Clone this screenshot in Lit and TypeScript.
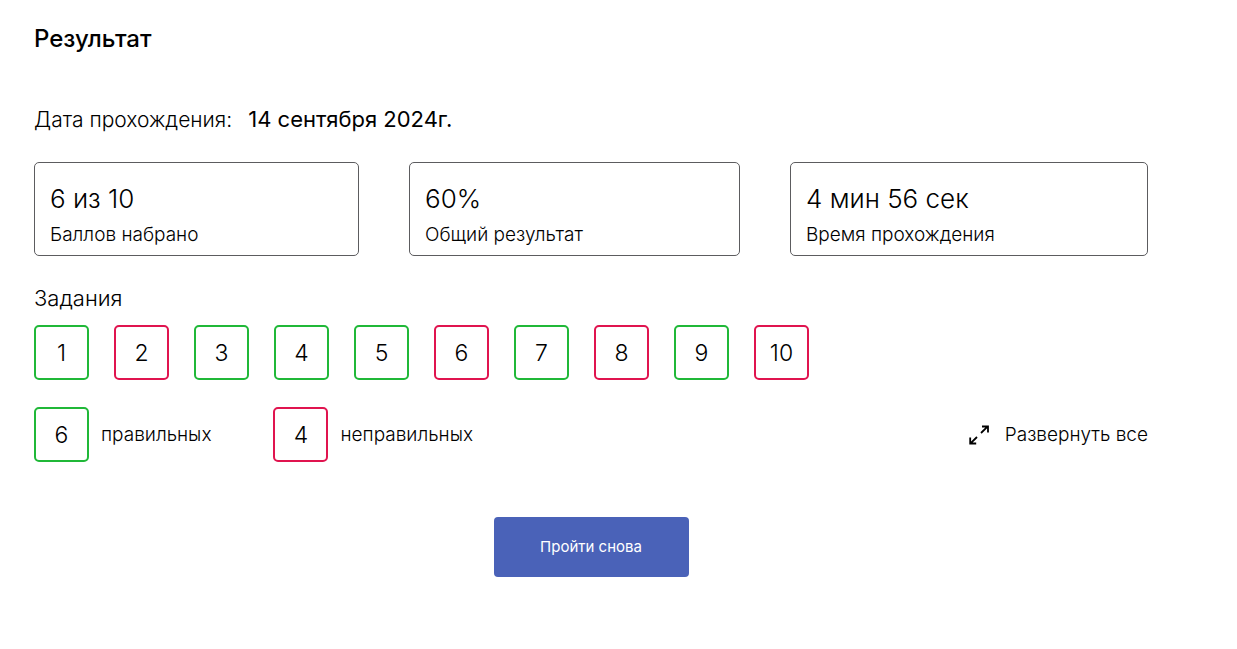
import { LitElement, html, css } from "lit";
import { customElement, property } from "lit/decorators.js";

@customElement("score-box")
class ScoreBox extends LitElement {
  @property() value = "";
  @property({ type: Boolean, reflect: true }) wrong = false;

  static styles = css`
    :host {
      box-sizing: border-box;
      flex: none;
      display: grid;
      place-items: center;
      width: 55px;
      height: 55px;
      border: 2px solid #20b838;
      border-radius: 5px;
      font-size: 23px;
      line-height: 28px;
    }
    :host([wrong]) {
      border-color: #e0144f;
    }
  `;

  render() {
    return html`<span>${this.value}</span>`;
  }
}

@customElement("app-root")
class AppRoot extends LitElement {
  private answers = [true, false, true, true, true, false, true, false, true, false];
  private stats = [
    { value: "6 из 10", label: "Баллов набрано" },
    { value: "60%", label: "Общий результат" },
    { value: "4 мин 56 сек", label: "Время прохождения" },
  ];

  static styles = css`
    :host {
      display: block;
      box-sizing: border-box;
      padding: 23px 89px 72px 34px;
      background: #fff;
      color: #000;
      font-family: Inter, "Open Sans", sans-serif;
      font-weight: 300;
      font-size: 19px;
      line-height: 24px;
    }
    .title {
      margin: 0;
      font-size: 24px;
      line-height: 32px;
      font-weight: 500;
    }
    .date {
      display: flex;
      align-items: baseline;
      gap: 16px;
      margin: 48px 0 26px;
      font-size: 21px;
      line-height: 32px;
    }
    .day {
      font-size: 22px;
      font-weight: 400;
    }
    .stats {
      display: grid;
      grid-template-columns: 325fr 331fr 358fr;
      gap: 50px;
    }
    .stat {
      padding: 18px 15px 8px;
      border: 1px solid #5c5c5f;
      border-radius: 5px;
    }
    .value {
      font-size: 26px;
      line-height: 36px;
      margin-bottom: 6px;
    }
    .tasks-title {
      margin: 28px 0 13px;
      font-size: 22px;
      line-height: 28px;
      font-weight: 300;
    }
    .boxes {
      display: flex;
      flex-wrap: wrap;
      gap: 25px;
    }
    .summary {
      display: flex;
      align-items: center;
      gap: 62px;
      margin: 27px 0 55px;
    }
    .total {
      display: flex;
      align-items: center;
      gap: 12px;
    }
    button {
      border: 0;
      font: inherit;
      cursor: pointer;
    }
    .expand {
      display: flex;
      align-items: center;
      gap: 16px;
      margin-left: auto;
      padding: 0;
      background: none;
      color: inherit;
    }
    .again {
      display: block;
      min-width: 195px;
      margin: 0 auto;
      padding: 18px 45px;
      border-radius: 4px;
      background: #4a62b8;
      color: #fff;
      font-size: 15px;
      line-height: 24px;
      font-weight: 400;
    }
  `;

  render() {
    return html`
      <h1 class="title">Результат</h1>
      <div class="date">
        <span>Дата прохождения:</span><span class="day">14 сентября 2024г.</span>
      </div>
      <div class="stats">
        ${this.stats.map(
          (s) => html`<div class="stat">
            <div class="value">${s.value}</div>
            <div>${s.label}</div>
          </div>`
        )}
      </div>
      <h2 class="tasks-title">Задания</h2>
      <div class="boxes">
        ${this.answers.map(
          (ok, i) => html`<score-box .value=${String(i + 1)} ?wrong=${!ok}></score-box>`
        )}
      </div>
      <div class="summary">
        <div class="total"><score-box value="6"></score-box><span>правильных</span></div>
        <div class="total"><score-box value="4" wrong></score-box><span>неправильных</span></div>
        <button class="expand">
          <svg width="20" height="20" viewBox="0 0 20 20" fill="none" stroke="#000" stroke-width="1.8" aria-hidden="true">
            <path d="M12 8 18.5 1.7M13 1.5h6V7.5M8 12 1.5 18.3M1.2 12.5v6H7.2" />
          </svg>
          <span>Развернуть все</span>
        </button>
      </div>
      <button class="again">Пройти снова</button>
    `;
  }
}
